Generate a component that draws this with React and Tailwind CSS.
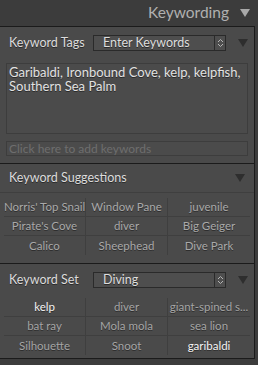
import React from "react";

const suggestions = [
  ["Norris' Top Snail", "Window Pane", "juvenile"],
  ["Pirate's Cove", "diver", "Big Geiger"],
  ["Calico", "Sheephead", "Dive Park"],
];

const keywordSet = [
  [{ t: "kelp", on: true }, { t: "diver" }, { t: "giant-spined s..." }],
  [{ t: "bat ray" }, { t: "Mola mola" }, { t: "sea lion" }],
  [{ t: "Silhouette" }, { t: "Snoot" }, { t: "garibaldi", on: true }],
];

const Triangle = ({ className }) => (
  <svg width="10" height="8" viewBox="0 0 10 8" className={className}>
    <polygon points="0,0 10,0 5,8" fill="currentColor" />
  </svg>
);

const Stepper = () => (
  <div className="w-[11px] h-full border-l border-[#2a2a2a] flex items-center justify-center">
    <svg width="7" height="10" viewBox="0 0 7 10">
      <polyline points="1,4 3.5,1.5 6,4" fill="none" stroke="#b5b5b5" strokeWidth="1" />
      <polyline points="1,6 3.5,8.5 6,6" fill="none" stroke="#b5b5b5" strokeWidth="1" />
    </svg>
  </div>
);

const Dropdown = ({ label }) => (
  <div className="w-[133px] h-[16px] bg-[#4e4e4e] border border-[#2a2a2a] flex items-center">
    <span className="flex-1 pl-[9px] text-[12.5px] leading-none text-[#dedede] [text-shadow:0_1px_0_#2a2a2a]">
      {label}
    </span>
    <Stepper />
  </div>
);

const Grid = ({ rows, render }) => (
  <div className="mx-[4px]">
    {rows.map((row, i) => (
      <div
        key={i}
        className={`grid grid-cols-3 h-[19px] ${i < rows.length - 1 ? "border-b border-[#3f3f3f]" : ""}`}
      >
        {row.map((cell, j) => (
          <div
            key={j}
            className={`flex items-center justify-center text-[11.5px] leading-none whitespace-nowrap overflow-hidden [text-shadow:0_1px_0_#2e2e2e] ${j < 2 ? "border-r border-[#3f3f3f]" : ""}`}
          >
            {render(cell)}
          </div>
        ))}
      </div>
    ))}
  </div>
);

export default function App() {
  return (
    <div className="w-[258px] h-[365px] bg-[#3c3c3c] overflow-hidden font-['Lato',sans-serif]">
      <div className="h-[26px] flex items-center justify-end pr-[8px] gap-[11px]">
        <span className="text-[15.5px] text-[#b0b0b0]">Keywording</span>
        <Triangle className="text-[#a9a9a9]" />
      </div>

      <div className="w-[255px] bg-[#4a4a4a] border-t border-r border-b border-[#1b1b1b]">
        {/* keyword tags */}
        <div className="pt-[8px] pb-[7px]">
          <div className="flex items-center h-[16px]">
            <span className="w-[93px] pl-[9px] text-[12.5px] text-[#dcdcdc] [text-shadow:0_1px_0_#2a2a2a]">
              Keyword Tags
            </span>
            <Dropdown label="Enter Keywords" />
            <Triangle className="ml-[12px] text-[#2e2e2e]" />
          </div>
          <div className="mt-[12px] mx-[6px] h-[71px] bg-[#4b4b4b] border border-[#3d3d3d] px-[2px] pt-[1px] text-[13px] leading-[14px] text-[#e2e2e2] [text-shadow:0_1px_0_#2a2a2a]">
            Garibaldi, Ironbound Cove, kelp, kelpfish, Southern Sea Palm
          </div>
          <div className="mt-[7px] mx-[6px] h-[15px] bg-[#4b4b4b] border border-[#3d3d3d] px-[2px] flex items-center text-[12px] leading-none text-[#6e6e6e]">
            Click here to add keywords
          </div>
        </div>

        {/* suggestions */}
        <div className="border-t border-[#1b1b1b]">
          <div className="h-[29px] flex items-center justify-between pl-[9px] pr-[9px] border-b border-[#3f3f3f]">
            <span className="text-[12.5px] text-[#dcdcdc] [text-shadow:0_1px_0_#2a2a2a]">
              Keyword Suggestions
            </span>
            <Triangle className="text-[#2e2e2e]" />
          </div>
          <div className="pt-[5px] pb-[8px]">
            <Grid rows={suggestions} render={(t) => <span className="text-[#a9a9a9]">{t}</span>} />
          </div>
        </div>

        {/* keyword set */}
        <div className="border-t border-[#1b1b1b] pt-[8px] pb-[3px]">
          <div className="flex items-center h-[16px]">
            <span className="w-[93px] pl-[9px] text-[12.5px] text-[#dcdcdc] [text-shadow:0_1px_0_#2a2a2a]">
              Keyword Set
            </span>
            <Dropdown label="Diving" />
            <Triangle className="ml-[12px] text-[#2e2e2e]" />
          </div>
          <div className="mt-[10px]">
            <Grid
              rows={keywordSet}
              render={(c) => (
                <span className={c.on ? "text-[#f4f4f4]" : "text-[#a5a5a5]"}>{c.t}</span>
              )}
            />
          </div>
        </div>
      </div>
    </div>
  );
}
